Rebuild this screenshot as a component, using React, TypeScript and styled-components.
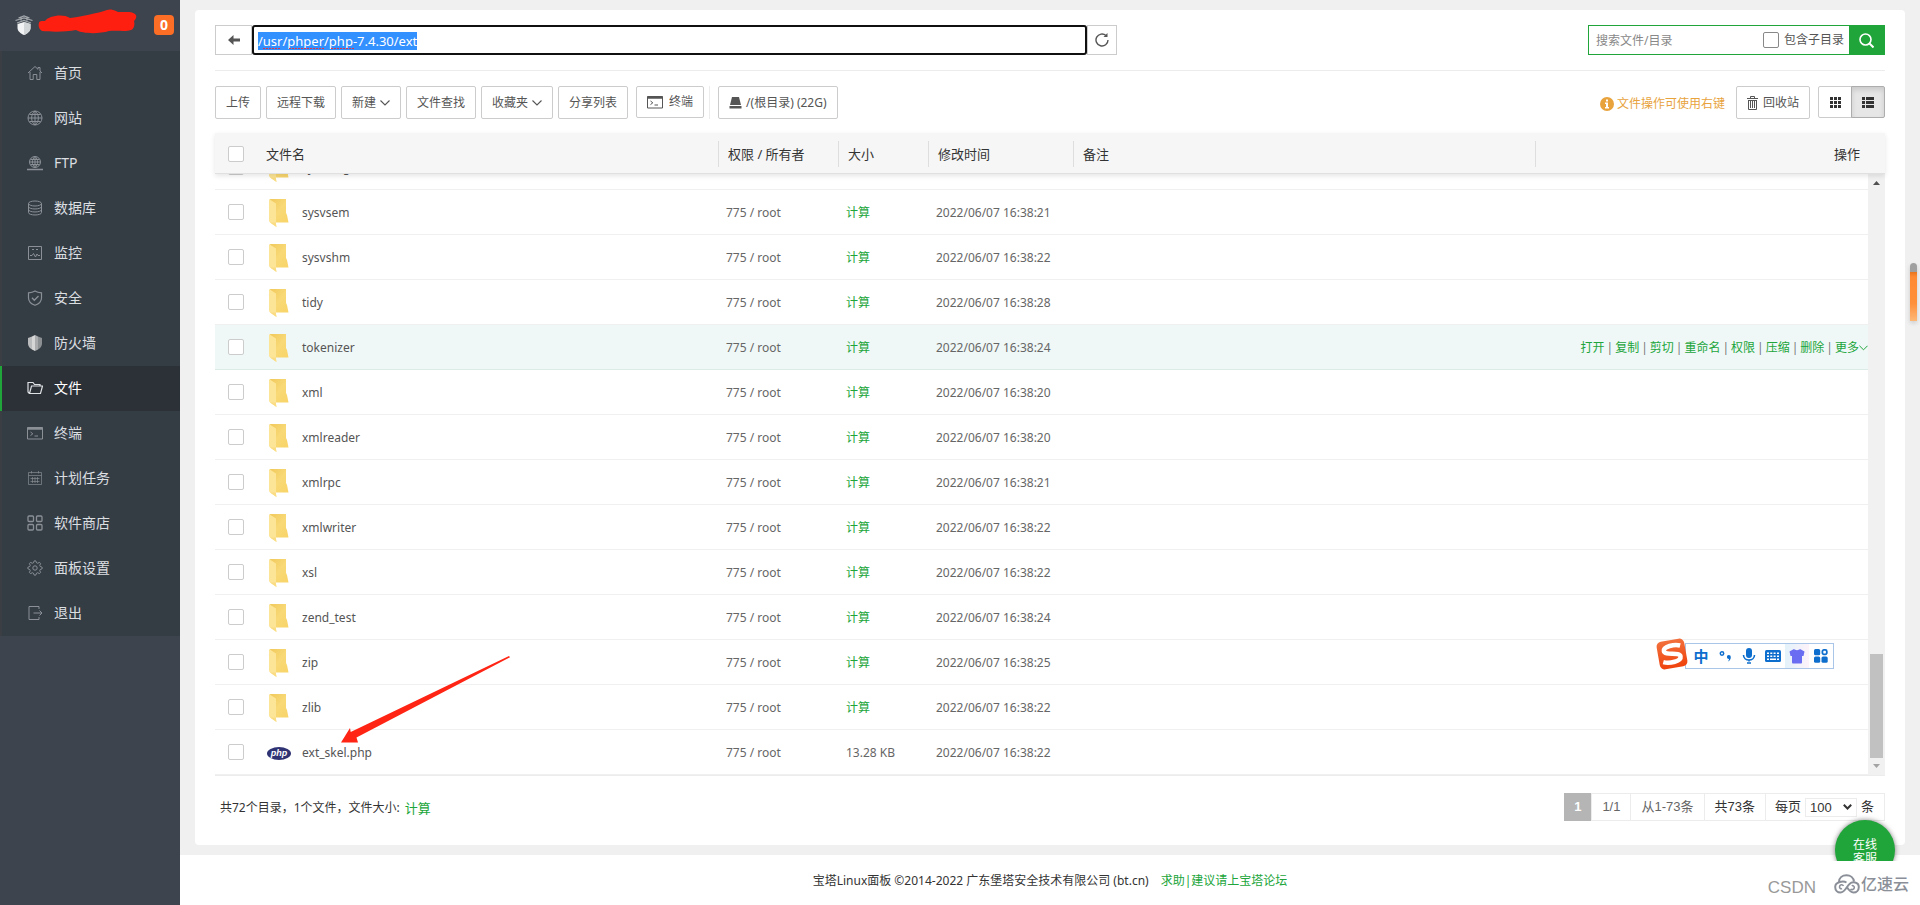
import React, { useEffect, useRef } from "react";
import styled, { createGlobalStyle, css } from "styled-components";

const GREEN = "#20a53a";

const GlobalStyle = createGlobalStyle`
  *, *::before, *::after { box-sizing: border-box; }
  body {
    margin: 0;
    background: #f0f0f0;
    color: #333;
    font: 12px/18px "Noto Sans", "Noto Sans CJK SC", sans-serif;
  }
  button, input, select { font: inherit; color: inherit; margin: 0; }
  button { cursor: pointer; }
  a { text-decoration: none; }
  svg { display: block; flex: none; }
`;

/* ---------- page frame ---------- */

const Page = styled.div`
  position: relative;
  display: flex;
  min-height: 100vh;
  overflow: hidden;
`;

const Main = styled.div`
  flex: 1;
  min-width: 0;
  display: flex;
  flex-direction: column;
`;

const Card = styled.main`
  flex: 1 1 auto;
  display: flex;
  flex-direction: column;
  margin: 10px 15px;
  padding: 15px 20px 24px;
  background: #fff;
  border-radius: 4px;
`;

const Footer = styled.footer`
  display: flex;
  align-items: center;
  justify-content: center;
  gap: 12px;
  height: 50px;
  padding-top: 2px;
  background: #fff;
`;

const GreenLink = styled.a<{ $large?: boolean }>`
  color: ${GREEN};
  font-size: ${(p) => (p.$large ? 13 : 12)}px;
`;

/* ---------- sidebar ---------- */

const Sidebar = styled.aside`
  flex: none;
  width: 180px;
  background: #3d444d;
`;

const Brand = styled.div`
  display: flex;
  align-items: center;
  height: 51px;
  padding: 0 6px 2px 15px;
`;

const Scribble = styled.svg`
  margin: 0 auto 6px 4px;
`;

const Badge = styled.span`
  width: 20px;
  height: 20px;
  border-radius: 4px;
  background: #fc6d26;
  color: #fff;
  font-size: 14px;
  font-weight: 700;
  line-height: 20px;
  text-align: center;
`;

const Menu = styled.nav`
  background: #353d44;
`;

const MenuItem = styled.a<{ $active?: boolean }>`
  display: flex;
  align-items: center;
  gap: 11px;
  height: 45px;
  padding: 0 0 2px 25px;
  border-left: 2px solid ${(p) => (p.$active ? GREEN : "#3b3f43")};
  background: ${(p) => (p.$active ? "#2c3138" : "transparent")};
  color: ${(p) => (p.$active ? "#fff" : "#dcdfe2")};
  font-size: 14px;

  svg { color: ${(p) => (p.$active ? "#dfe2e4" : "#8a9096")}; }
`;

/* ---------- path and search ---------- */

const PathRow = styled.div`
  display: flex;
  justify-content: space-between;
  padding-bottom: 15px;
  border-bottom: 1px solid #ececec;
`;

const PathGroup = styled.div`
  display: flex;
  width: 54%;
  height: 30px;
`;

const PathButton = styled.button<{ $width: number }>`
  flex: none;
  display: flex;
  align-items: center;
  justify-content: center;
  width: ${(p) => p.$width}px;
  padding: 0;
  border: 1px solid #ccc;
  background: #fff;
  color: #555;
`;

const PathField = styled.div`
  position: relative;
  flex: 1;
`;

const PathInput = styled.input`
  display: block;
  width: 100%;
  height: 30px;
  padding: 2px 4px 0;
  border: 2px solid #101010;
  border-radius: 3px;
  outline: none;
  background: #fff;
  font-size: 13px;
  caret-color: transparent;

  &::selection { background: #3390ff; color: #fff; }
`;

const SpellMarks = styled.svg`
  position: absolute;
  left: 6px;
  top: 21px;
  pointer-events: none;
`;

const Search = styled.form`
  flex: none;
  display: flex;
  align-items: center;
  width: 297px;
  height: 30px;
  border: 1px solid ${GREEN};
  color: #555;
`;

const SearchInput = styled.input`
  flex: 1;
  min-width: 0;
  padding: 2px 7px 0;
  border: 0;
  outline: none;
  background: transparent;

  &::placeholder { color: #888; opacity: 1; }
`;

const SearchButton = styled.button`
  display: flex;
  align-items: center;
  justify-content: center;
  width: 35px;
  height: 28px;
  padding: 0;
  border: 0;
  background: ${GREEN};
  color: #fff;
`;

const CheckLabel = styled.label`
  display: flex;
  align-items: center;
  gap: 5px;
  margin-right: 5px;
`;

const Checkbox = styled.input.attrs({ type: "checkbox" })<{ $dark?: boolean }>`
  appearance: none;
  display: block;
  width: 16px;
  height: 16px;
  border: 1px solid ${(p) => (p.$dark ? "#888" : "#ccc")};
  border-radius: 2px;
  background: #fff;
`;

/* ---------- toolbar ---------- */

const Toolbar = styled.div`
  display: flex;
  justify-content: space-between;
  margin: 15px 0 14px;
`;

const ToolGroup = styled.div`
  display: flex;
  align-items: flex-start;
  gap: 5px;
`;

const ToolButton = styled.button<{ $gap?: number; $short?: boolean }>`
  display: flex;
  align-items: center;
  gap: ${(p) => p.$gap ?? 4}px;
  height: ${(p) => (p.$short ? 32 : 33)}px;
  padding: 0 10px;
  border: 1px solid #ccc;
  border-radius: 2px;
  background: #fff;
  color: #555;
  white-space: nowrap;
`;

const TerminalSlot = styled.div`
  height: 33px;
  margin-left: 3px;
  padding-right: 5px;
  border-right: 1px solid #ececec;
`;

const DiskSlot = styled.div`
  margin-left: 3px;
`;

const Hint = styled.span`
  display: flex;
  align-items: center;
  align-self: center;
  gap: 3px;
  margin-right: 6px;
  padding-top: 2px;
  color: #e8a33d;
`;

const ViewSwitch = styled.div`
  display: flex;
  margin-left: 3px;
`;

const ViewButton = styled.button<{ $on?: boolean }>`
  display: flex;
  align-items: center;
  justify-content: center;
  width: 34px;
  height: 32px;
  padding: 0;
  border: 1px solid #ccc;
  border-radius: 2px 0 0 2px;
  background: #fff;
  color: #333;
  ${(p) =>
    p.$on &&
    css`
      margin-left: -1px;
      border-color: #adadad;
      border-radius: 0 2px 2px 0;
      background: #e6e6e6;
      box-shadow: inset 0 3px 5px rgba(0, 0, 0, 0.12);
    `}
`;

/* ---------- file list ---------- */

const HeadTable = styled.table`
  position: relative;
  z-index: 1;
  width: 100%;
  table-layout: fixed;
  border-collapse: separate;
  border-spacing: 0;
  background: #f6f6f6;
  border-bottom: 1px solid #e0e0e0;
  box-shadow: 0 2px 5px rgba(0, 0, 0, 0.1);
`;

const HeadCell = styled.th<{ $right?: boolean }>`
  height: 40px;
  padding: 2px 0 0;
  font-size: 13px;
  font-weight: 400;
  text-align: ${(p) => (p.$right ? "right" : "left")};
`;

const HeadLabel = styled.div<{ $line?: boolean; $end?: boolean }>`
  height: 26px;
  line-height: 26px;
  padding: 0 ${(p) => (p.$end ? 25 : 0)}px 0 ${(p) => (p.$line ? 9 : 0)}px;
  border-left: ${(p) => (p.$line ? "1px solid #dedede" : "0")};
`;

const ListArea = styled.div`
  flex: 1 1 0px;
  min-height: 300px;
  display: flex;
  overflow: hidden;
`;

const Rows = styled.div`
  flex: 1;
  min-width: 0;
  display: flex;
  flex-direction: column;
  justify-content: flex-end;
`;

const BodyTable = styled.table`
  width: 100%;
  table-layout: fixed;
  border-collapse: separate;
  border-spacing: 0;
  color: #666;
`;

const Row = styled.tr<{ $hover?: boolean }>`
  background: ${(p) => (p.$hover ? "#f0f8f7" : "#fff")};
`;

const Cell = styled.td<{ $hover?: boolean; $right?: boolean }>`
  height: 45px;
  padding: 2px 0 0 8px;
  border-bottom: 1px solid ${(p) => (p.$hover ? "#dcebe6" : "#f0f0f0")};
  text-align: ${(p) => (p.$right ? "right" : "left")};
  white-space: nowrap;
`;

const CheckCell = styled(Cell)`
  padding: 0 0 0 13px;
`;

const NameCell = styled(Cell)`
  padding-left: 1px;
`;

const CheckHead = styled(HeadCell)`
  padding-left: 13px;
`;

const NameWrap = styled.div`
  position: relative;
  display: flex;
  align-items: center;
  gap: 11px;
  color: #555;
`;

const Actions = styled.div`
  display: flex;
  align-items: center;
  justify-content: flex-end;
  color: #777;
`;

const Bar = styled.span`
  padding: 0 2px;
`;

const MoreLink = styled(GreenLink)`
  display: flex;
  align-items: center;
`;

const Annotation = styled.svg`
  position: absolute;
  left: 74px;
  bottom: 24px;
  pointer-events: none;
`;

const Scrollbar = styled.div`
  flex: none;
  display: flex;
  flex-direction: column;
  align-items: center;
  width: 17px;
  padding: 5px 0;
  background: #f1f1f1;
`;

const Track = styled.div`
  flex: 1;
  display: flex;
  flex-direction: column;
  justify-content: flex-end;
  padding-bottom: 4px;
`;

const Thumb = styled.div`
  width: 13px;
  height: 104px;
  background: #c1c1c1;
`;

/* ---------- summary and paging ---------- */

const BottomRow = styled.div`
  display: flex;
  justify-content: space-between;
  align-items: flex-end;
  padding-top: 17px;
  border-top: 1px solid #ececec;
`;

const Summary = styled.div`
  display: flex;
  align-items: center;
  gap: 5px;
  height: 28px;
  padding: 2px 0 0 5px;
`;

const Pager = styled.div`
  display: flex;
  height: 28px;
  border: 1px solid #ececec;
  border-left: 0;
  font: 13px/26px "Liberation Sans", "Noto Sans CJK SC", sans-serif;
`;

const PagerPart = styled.span<{ $current?: boolean; $soft?: boolean }>`
  display: flex;
  align-items: center;
  padding: 0 10px;
  color: ${(p) => (p.$soft ? "#666" : "#333")};
  & + & { border-left: 1px solid #ececec; }
  ${(p) =>
    p.$current &&
    css`
      margin: -1px 0;
      background: #b5b5b5;
      color: #fff;
      font-weight: 700;
    `}
`;

const PagerLabel = styled.label`
  display: flex;
  align-items: center;
  gap: 4px;
  padding: 0 10px 0 9px;
  border-left: 1px solid #ececec;
`;

const SelectBox = styled.span`
  position: relative;
  display: flex;
  align-items: center;
  color: #333;

  svg { position: absolute; right: 5px; pointer-events: none; }
`;

const SizeSelect = styled.select`
  appearance: none;
  width: 52px;
  height: 19px;
  padding: 0 4px;
  border: 1px solid #ececec;
  background: #fff;
  line-height: 17px;
`;

/* ---------- floating pieces ---------- */

const InputMethod = styled.div`
  position: absolute;
  right: 86px;
  bottom: 236px;
  display: flex;
  align-items: center;
  width: 149px;
  height: 26px;
  padding-left: 3px;
  border: 1px solid #a9c6e8;
  background: #fff;
  color: #0d6ecd;
`;

const InputMethodLogo = styled.span`
  position: absolute;
  left: -28px;
  top: -4px;
  width: 28px;
  height: 28px;
  border-radius: 5px;
  background: linear-gradient(#f2703c, #f0430d);
  transform: rotate(-10deg);
`;

const InputMethodKey = styled.span<{ $tint?: boolean }>`
  display: flex;
  align-items: center;
  justify-content: center;
  width: 24px;
  height: 24px;
  font-size: 15px;
  font-weight: 700;
  background: ${(p) => (p.$tint ? "linear-gradient(90deg, #e3f2fa, #fdf2fa)" : "none")};
`;

const EdgeTab = styled.div`
  position: absolute;
  right: 3px;
  top: 263px;
  width: 7px;
  height: 58px;
  border-radius: 4px 4px 0 0;
  background: linear-gradient(#a0a0a0 0 9px, #e8761f 9px, #ff8a33 14px, #ff8f3a 40px, #fdb877 58px);
  box-shadow: 0 2px 4px rgba(0, 0, 0, 0.15);
`;

const ServiceClip = styled.div`
  position: absolute;
  right: 17px;
  bottom: 44px;
  width: 76px;
  height: 49px;
  overflow: hidden;
`;

const ServiceButton = styled.button`
  display: block;
  width: 60px;
  height: 60px;
  margin: 8px;
  padding: 0 17px;
  border: 0;
  border-radius: 50%;
  background: ${GREEN};
  color: #fff;
  line-height: 14px;
  box-shadow: 0 0 5px rgba(0, 0, 0, 0.5);
`;

const ServiceText = styled.span`
  display: block;
  padding-top: 4px;
`;

const Watermarks = styled.div`
  position: absolute;
  right: 11px;
  bottom: 7px;
  display: flex;
  align-items: center;
  gap: 18px;
  color: #8b8f98;
`;

const CsdnMark = styled.span`
  padding-top: 5px;
  color: #999;
  font: 17px/20px "Liberation Sans", sans-serif;
`;

const CloudMark = styled.span`
  display: flex;
  align-items: center;
  gap: 1px;
  margin-bottom: 4px;
  font-size: 16px;
  font-weight: 500;
`;

/* ---------- icons ---------- */

const Line = ({ children, size = 16 }: { children: React.ReactNode; size?: number }) => (
  <svg width={size} height={size} viewBox="0 0 16 16" fill="none" stroke="currentColor" strokeWidth="1" aria-hidden="true">
    {children}
  </svg>
);

const HomeIcon = () => (
  <Line>
    <path d="M1 8 8 1.5l3 2.8V2.5h2v3.6L15 8M3 7v7.5h3.2v-5h3.6v5H13V7" />
  </Line>
);
const GlobeIcon = () => (
  <Line>
    <path d="M1 8a7 7 0 1 0 14 0A7 7 0 1 0 1 8M1 8h14M8 1v14M2.5 4.5h11M2.5 11.5h11M8 1C3.5 4 3.5 12 8 15M8 1c4.5 3 4.5 11 0 14" />
  </Line>
);
const FtpIcon = () => (
  <Line>
    <path d="M2.5 7a5.5 5.5 0 1 0 11 0a5.5 5.5 0 1 0-11 0M2.5 7h11M8 1.5v11M3.5 4.500h9M3.5 9.5h9M8 1.5c-3.500 3-3.500 8 0 11M8 1.5c3.500 3 3.500 8 0 11" />
    <path d="M0 14.500h16M5.500 14.500h5" strokeWidth="1.500" />
  </Line>
);
const DatabaseIcon = () => (
  <Line>
    <ellipse cx="8" cy="3.500" rx="6.500" ry="2.500" />
    <path d="M1.500 3.500v9c0 3.300 13 3.300 13 0v-9M1.500 6.500c0 3.300 13 3.300 13 0M1.500 9.500c0 3.300 13 3.300 13 0" />
  </Line>
);
const MonitorIcon = () => (
  <Line>
    <path d="M1.500 1.500h13v13h-13zM3 10.500h2l1.500-2 2 3.500L10 9l1 1.500h2" />
    <path d="M5 4.500h2M9 4.500h2" />
  </Line>
);
const ShieldCheckIcon = () => (
  <Line>
    <path d="M8 1c2 1.300 4 1.700 6.500 1.800V8c0 3.500-3 6-6.500 7.300C4.500 14 1.500 11.500 1.500 8V2.800C4 2.700 6 2.300 8 1z" strokeWidth="1.200" />
    <path d="m5 7.800 2.300 2.400L11.500 6" strokeWidth="1.300" />
  </Line>
);
const FirewallIcon = () => (
  <svg width="16" height="16" viewBox="0 0 16 16" aria-hidden="true">
    <path d="M8 0 5 1.500v13L8 16z" fill="#d6d6d6" />
    <path d="M5 1.500 1 3v6c0 2 2 4.500 4 5.500z" fill="#b9bbbc" />
    <path d="m8 0 3 1.500v13L8 16z" fill="#a9abad" />
    <path d="M11 1.500 15 3v6c0 2-2 4.500-4 5.500z" fill="#8d9093" />
  </svg>
);
const FolderOpenIcon = () => (
  <Line>
    <path d="M2.500 13.500 1 12V2.500h5l1.500 2H13V6M2.500 13.500h11L15.500 6H4.500z" strokeWidth="1.200" />
  </Line>
);
const TerminalIcon = () => (
  <Line>
    <path d="M.500 2.500h15v11.500H.500z" />
    <path d="M.500 3.500h15" strokeWidth="2.500" />
    <path d="m3.500 7 2.300 1.800-2.300 1.800M7.500 11h3.500" />
  </Line>
);
const CalendarIcon = () => (
  <Line>
    <path d="M1.500 2.500h13v12h-13zM1.500 5.500h13M4.500 1v2.500M11.500 1v2.500M3.500 8.500h9M3.500 11.500h9M5.500 7v6M8 7v6M10.500 7v6" opacity=".65" />
  </Line>
);
const AppsIcon = () => (
  <Line>
    {[1, 9.5].map((x) => [1, 9.5].map((y) => <rect key={`${x}-${y}`} x={x} y={y} width="5.500" height="5.500" rx="1" strokeWidth="1.300" />))}
  </Line>
);

const gearOutline = Array.from({ length: 32 }, (_, i) => {
  const angle = ((i - 0.5) * Math.PI) / 16;
  const radius = i % 4 < 2 ? 7.2 : 5.4;
  return `${(8 + radius * Math.sin(angle)).toFixed(2)},${(8 - radius * Math.cos(angle)).toFixed(2)}`;
}).join(" ");

const GearIcon = () => (
  <Line>
    <polygon points={gearOutline} />
    <circle cx="8" cy="8" r="2.200" />
  </Line>
);
const ExitIcon = () => (
  <Line>
    <path d="M12 4V1.500H2v13h10V12M6.500 8H15M12.500 5.500 15 8l-2.500 2.500" />
  </Line>
);

const Chevron = ({ width = 10 }: { width?: number }) => (
  <svg width={width} height="8" viewBox="0 0 10 8" fill="none" stroke="currentColor" strokeWidth="1.100" aria-hidden="true">
    <path d="m.500 1.500 4.500 4.500 4.500-4.500" />
  </svg>
);

const BrandShield = () => (
  <svg width="18" height="20" viewBox="0 0 18 20" aria-hidden="true">
    <path d="M2.500 9 9 7l6.500 2v4c0 3-3 5.500-6.500 7-3.500-1.500-6.500-4-6.500-7z" fill="#f2f3f4" />
    <path d="M9 7l6.500 2v4c0 3-3 5.500-6.500 7z" fill="#d3d6d9" />
    <path d="M2 8 9 5.500 16 8M.500 5.500 9 3l8.500 2.500M3.500 3 9 1l5.500 2M6 1.500v4M12 1.500v4" fill="none" stroke="#a3a8ad" strokeWidth="1.300" />
  </svg>
);

const FolderIcon = () => (
  <svg width="24" height="28" viewBox="0 0 24 28" aria-hidden="true">
    <defs>
      <linearGradient id="folderBack" x1="0" x2="1" y1="0" y2="1">
        <stop offset="0" stopColor="#f1c95c" />
        <stop offset=".5" stopColor="#f8d976" />
        <stop offset="1" stopColor="#f9d468" />
      </linearGradient>
    </defs>
    <path d="M3 0h16v14l1 2 1.500 7.500H8z" fill="url(#folderBack)" />
    <path d="M2 0 9 4.500v20L9.500 28 3 23.500 2 22z" fill="#fce596" />
    <path d="M3 23.500h5.500L9.500 28z" fill="#f9dc83" />
  </svg>
);

const PhpIcon = () => (
  <svg width="24" height="28" viewBox="0 0 24 28" aria-hidden="true">
    <ellipse cx="12" cy="14.500" rx="12" ry="6.500" fill="#2f3374" />
    <text x="12" y="17" fill="#fff" fontFamily="Liberation Sans, sans-serif" fontSize="9" fontWeight="700" fontStyle="italic" textAnchor="middle">
      php
    </text>
  </svg>
);

const DiskIcon = () => (
  <svg width="13" height="12" viewBox="0 0 13 12" fill="#555" aria-hidden="true">
    <path d="M3 0h7l2 8H1zM.500 9h12v2.500H.500z" />
  </svg>
);

const TrashIcon = () => (
  <svg width="11" height="14" viewBox="0 0 11 14" fill="none" stroke="#555" aria-hidden="true">
    <path d="M0 2.500h11M3.500 2.500v-2h4v2M1.500 4v9.500h8V4M3.500 5v7M5.500 5v7M7.500 5v7M1 4.500h9" />
  </svg>
);

/* ---------- data ---------- */

const menu: { label: string; icon: React.FC; active?: boolean }[] = [
  { label: "首页", icon: HomeIcon },
  { label: "网站", icon: GlobeIcon },
  { label: "FTP", icon: FtpIcon },
  { label: "数据库", icon: DatabaseIcon },
  { label: "监控", icon: MonitorIcon },
  { label: "安全", icon: ShieldCheckIcon },
  { label: "防火墙", icon: FirewallIcon },
  { label: "文件", icon: FolderOpenIcon, active: true },
  { label: "终端", icon: TerminalIcon },
  { label: "计划任务", icon: CalendarIcon },
  { label: "软件商店", icon: AppsIcon },
  { label: "面板设置", icon: GearIcon },
  { label: "退出", icon: ExitIcon },
];

const files: { name: string; time?: string; size?: string; hover?: boolean }[] = [
  { name: "sysvmsg" },
  { name: "sysvsem", time: "16:38:21" },
  { name: "sysvshm", time: "16:38:22" },
  { name: "tidy", time: "16:38:28" },
  { name: "tokenizer", time: "16:38:24", hover: true },
  { name: "xml", time: "16:38:20" },
  { name: "xmlreader", time: "16:38:20" },
  { name: "xmlrpc", time: "16:38:21" },
  { name: "xmlwriter", time: "16:38:22" },
  { name: "xsl", time: "16:38:22" },
  { name: "zend_test", time: "16:38:24" },
  { name: "zip", time: "16:38:25" },
  { name: "zlib", time: "16:38:22" },
  { name: "ext_skel.php", time: "16:38:22", size: "13.28 KB" },
];

const rowActions = ["打开", "复制", "剪切", "重命名", "权限", "压缩", "删除"];

const Columns = ({ last }: { last: number }) => (
  <colgroup>
    <col width="51" />
    <col width="452" />
    <col width="120" />
    <col width="90" />
    <col width="145" />
    <col />
    <col width={last} />
  </colgroup>
);

const FileRow = ({ file }: { file: (typeof files)[number] }) => {
  const h = file.hover;
  return (
    <Row $hover={h}>
      <CheckCell $hover={h}>
        <Checkbox aria-label={file.name} />
      </CheckCell>
      <NameCell $hover={h}>
        <NameWrap>
          {file.size ? <PhpIcon /> : <FolderIcon />}
          {file.name}
          {file.size && (
            <Annotation width="170" height="88" viewBox="0 0 170 88" fill="#ff2414" aria-hidden="true">
              <path d="M0 87.500 9 73l.7 4L168 1l1 1.200L15.500 82.500 17 87.500z" />
            </Annotation>
          )}
        </NameWrap>
      </NameCell>
      <Cell $hover={h}>{file.time && "775 / root"}</Cell>
      <Cell $hover={h}>{file.time && (file.size ?? <GreenLink href="#size">计算</GreenLink>)}</Cell>
      <Cell $hover={h}>{file.time && `2022/06/07 ${file.time}`}</Cell>
      <Cell $hover={h} />
      <Cell $hover={h} $right>
        {h && (
          <Actions>
            {rowActions.map((a) => (
              <React.Fragment key={a}>
                <GreenLink href="#action">{a}</GreenLink>
                <Bar>|</Bar>
              </React.Fragment>
            ))}
            <MoreLink href="#more">
              更多
              <Chevron width={9} />
            </MoreLink>
          </Actions>
        )}
      </Cell>
    </Row>
  );
};

export default function App() {
  const pathRef = useRef<HTMLInputElement>(null);

  useEffect(() => {
    pathRef.current?.focus();
    pathRef.current?.select();
  }, []);

  return (
    <Page>
      <GlobalStyle />
      <Sidebar>
        <Brand>
          <BrandShield />
          <Scribble width="100" height="26" viewBox="0 0 100 26" aria-hidden="true">
            <path
              d="M2 14c0-2 3-2 6-2 3-5 18-8 25-3 10-1 28-5 37-8 5-2 10 2 12 2 8 0 14-1 17 3 1 3-1 5-2 6 1 4 0 8-3 9-6 2-14 0-22 1-10 3-26 3-33-1-10 2-24 2-34 1-3-2-4-5-3-8z"
              fill="#ff1f10"
            />
          </Scribble>
          <Badge>0</Badge>
        </Brand>
        <Menu>
          {menu.map(({ label, icon: Icon, active }) => (
            <MenuItem key={label} href="#menu" $active={active}>
              <Icon />
              {label}
            </MenuItem>
          ))}
        </Menu>
      </Sidebar>

      <Main>
        <Card>
          <PathRow>
            <PathGroup>
              <PathButton $width={37} aria-label="返回上一级">
                <svg width="12" height="10" viewBox="0 0 12 10" fill="currentColor" aria-hidden="true">
                  <path d="M5.500 0v3.500H12v3H5.500V10L0 5z" />
                </svg>
              </PathButton>
              <PathField>
                <PathInput ref={pathRef} defaultValue="/usr/phper/php-7.4.30/ext" aria-label="路径" spellCheck={false} />
                <SpellMarks width="100" height="4" viewBox="0 0 100 4" fill="none" stroke="#e0364c" strokeDasharray="2 1" aria-hidden="true">
                  <path d="M5 2.500h18M31 2.500h35M73 2.500h24" />
                </SpellMarks>
              </PathField>
              <PathButton $width={30} aria-label="刷新">
                <svg width="14" height="14" viewBox="0 0 14 14" fill="none" stroke="currentColor" strokeWidth="1.400" aria-hidden="true">
                  <path d="M13 7a6 6 0 1 1-2-4.500" />
                  <path d="M12.500 0v4H8.500z" fill="currentColor" stroke="none" />
                </svg>
              </PathButton>
            </PathGroup>
            <Search>
              <SearchInput placeholder="搜索文件/目录" aria-label="搜索文件/目录" />
              <CheckLabel>
                <Checkbox $dark />
                包含子目录
              </CheckLabel>
              <SearchButton type="button" aria-label="搜索">
                <svg width="15" height="15" viewBox="0 0 15 15" fill="none" stroke="currentColor" strokeWidth="1.600" aria-hidden="true">
                  <circle cx="6.500" cy="6.500" r="5.500" />
                  <path d="m10.500 10.500 4 4" strokeWidth="2" />
                </svg>
              </SearchButton>
            </Search>
          </PathRow>

          <Toolbar>
            <ToolGroup>
              <ToolButton>上传</ToolButton>
              <ToolButton>远程下载</ToolButton>
              <ToolButton>
                新建
                <Chevron />
              </ToolButton>
              <ToolButton>文件查找</ToolButton>
              <ToolButton>
                收藏夹
                <Chevron />
              </ToolButton>
              <ToolButton>分享列表</ToolButton>
              <TerminalSlot>
                <ToolButton $gap={6} $short>
                  <TerminalIcon />
                  终端
                </ToolButton>
              </TerminalSlot>
              <DiskSlot>
                <ToolButton>
                  <DiskIcon />
                  /(根目录) (22G)
                </ToolButton>
              </DiskSlot>
            </ToolGroup>
            <ToolGroup>
              <Hint>
                <svg width="14" height="14" viewBox="0 0 14 14" aria-hidden="true">
                  <circle cx="7" cy="7" r="7" fill="#e8a33d" />
                  <path d="M6 2.500h2v2H6zM5 5.500h3v4.500h1v1.500H5V10h1V7H5z" fill="#fff" />
                </svg>
                文件操作可使用右键
              </Hint>
              <ToolButton $gap={5}>
                <TrashIcon />
                回收站
              </ToolButton>
              <ViewSwitch>
                <ViewButton aria-label="图标视图">
                  <svg width="11" height="11" viewBox="0 0 11 11" fill="currentColor" aria-hidden="true">
                    <path d="M0 0h3v3H0zM4 0h3v3H4zM8 0h3v3H8zM0 4h3v3H0zM4 4h3v3H4zM8 4h3v3H8zM0 8h3v3H0zM4 8h3v3H4zM8 8h3v3H8z" />
                  </svg>
                </ViewButton>
                <ViewButton $on aria-label="列表视图">
                  <svg width="12" height="11" viewBox="0 0 12 11" fill="currentColor" aria-hidden="true">
                    <path d="M0 0h3v3H0zM4 0h8v3H4zM0 4h3v3H0zM4 4h8v3H4zM0 8h3v3H0zM4 8h8v3H4z" />
                  </svg>
                </ViewButton>
              </ViewSwitch>
            </ToolGroup>
          </Toolbar>

          <HeadTable>
            <Columns last={350} />
            <thead>
              <tr>
                <CheckHead>
                  <Checkbox aria-label="全选" />
                </CheckHead>
                <HeadCell>
                  <HeadLabel>文件名</HeadLabel>
                </HeadCell>
                {["权限 / 所有者", "大小", "修改时间", "备注"].map((t) => (
                  <HeadCell key={t}>
                    <HeadLabel $line>{t}</HeadLabel>
                  </HeadCell>
                ))}
                <HeadCell $right>
                  <HeadLabel $line $end>
                    操作
                  </HeadLabel>
                </HeadCell>
              </tr>
            </thead>
          </HeadTable>

          <ListArea>
            <Rows>
              <BodyTable aria-label="文件列表">
                <Columns last={333} />
                <tbody>
                  {files.map((f) => (
                    <FileRow key={f.name} file={f} />
                  ))}
                </tbody>
              </BodyTable>
            </Rows>
            <Scrollbar aria-hidden="true">
              <svg width="7" height="8" viewBox="0 0 7 8" fill="#505050">
                <path d="m0 6 3.500-4L7 6z" />
              </svg>
              <Track>
                <Thumb />
              </Track>
              <svg width="7" height="8" viewBox="0 0 7 8" fill="#a3a3a3">
                <path d="m0 2 3.500 4L7 2z" />
              </svg>
            </Scrollbar>
          </ListArea>

          <BottomRow>
            <Summary>
              共72个目录，1个文件，文件大小:
              <GreenLink $large href="#total">
                计算
              </GreenLink>
            </Summary>
            <Pager>
              <PagerPart $current>1</PagerPart>
              <PagerPart $soft>1/1</PagerPart>
              <PagerPart $soft>从1-73条</PagerPart>
              <PagerPart>共73条</PagerPart>
              <PagerLabel>
                每页
                <SelectBox>
                  <SizeSelect defaultValue="100">
                    <option>100</option>
                  </SizeSelect>
                  <svg width="9" height="6" viewBox="0 0 9 6" fill="none" stroke="currentColor" strokeWidth="2" aria-hidden="true">
                    <path d="m.800.800 3.700 3.700L8.200.800" />
                  </svg>
                </SelectBox>
                条
              </PagerLabel>
            </Pager>
          </BottomRow>
        </Card>
        <Footer>
          <span>宝塔Linux面板 ©2014-2022 广东堡塔安全技术有限公司 (bt.cn)</span>
          <GreenLink href="#forum">求助|建议请上宝塔论坛</GreenLink>
        </Footer>
      </Main>

      <InputMethod>
        <InputMethodLogo>
          <svg width="28" height="28" viewBox="0 0 28 28" fill="none" stroke="#fff" strokeWidth="4.500" aria-hidden="true">
            <path d="M23.500 7C18 4.500 6.500 5 6.500 9.800c0 5 15.500 3 15.500 8 0 5-12 5.500-18 2.700" />
          </svg>
        </InputMethodLogo>
        <InputMethodKey>中</InputMethodKey>
        <InputMethodKey>
          <svg width="14" height="14" viewBox="0 0 14 14" fill="none" stroke="currentColor" strokeWidth="1.500" aria-hidden="true">
            <circle cx="4" cy="4.500" r="1.700" />
            <path d="M10.800 6a2 2 0 0 1 2 2c0 2.400-1.300 4-3 4.500.700-.800 1.200-1.500 1.200-2.500A2 2 0 0 1 10.800 6z" fill="currentColor" stroke="none" />
          </svg>
        </InputMethodKey>
        <InputMethodKey>
          <svg width="14" height="16" viewBox="0 0 14 16" fill="none" stroke="currentColor" strokeWidth="1.600" aria-hidden="true">
            <rect x="4" y="0" width="6" height="10" rx="3" fill="currentColor" stroke="none" />
            <path d="M1.500 7c0 3 2.500 5 5.500 5s5.500-2 5.500-5M7 12v1.500M5 15h4" />
          </svg>
        </InputMethodKey>
        <InputMethodKey>
          <svg width="16" height="12" viewBox="0 0 16 12" aria-hidden="true">
            <rect width="16" height="12" rx="1.500" fill="currentColor" />
            <path d="M2 2.500h2v1.500H2zM5.300 2.500h2v1.500h-2zM8.600 2.500h2v1.500h-2zM12 2.500h2v1.500h-2zM2 5.500h2V7H2zM5.300 5.500h2V7h-2zM8.600 5.500h2V7h-2zM12 5.500h2V7h-2zM2 8.500h2v1.500H2zM5 8.500h6v1.500H5zM12 8.500h2v1.500h-2z" fill="#fff" />
          </svg>
        </InputMethodKey>
        <InputMethodKey $tint>
          <svg width="16" height="16" viewBox="0 0 16 16" aria-hidden="true">
            <path d="M5 1c1 1.500 5 1.500 6 0l4.500 2.500-1 4.500H13v6.500c0 .500-.500 1-1 1H4c-.500 0-1-.500-1-1V8H1.500L.500 3.500z" fill="#6a6cf2" />
          </svg>
        </InputMethodKey>
        <InputMethodKey>
          <svg width="14" height="14" viewBox="0 0 14 14" fill="currentColor" aria-hidden="true">
            <rect width="6.200" height="6.200" rx="1.500" />
            <rect y="7.500" width="6.200" height="6.200" rx="1.500" />
            <rect x="7.500" y="7.500" width="6.200" height="6.200" rx="1.500" />
            <rect x="8.400" y=".900" width="4.400" height="4.400" rx="1.500" fill="none" stroke="currentColor" strokeWidth="1.800" />
          </svg>
        </InputMethodKey>
      </InputMethod>

      <EdgeTab />
      <ServiceClip>
        <ServiceButton>
          <ServiceText>在线客服</ServiceText>
        </ServiceButton>
      </ServiceClip>

      <Watermarks>
        <CsdnMark>CSDN</CsdnMark>
        <CloudMark>
          <svg width="26" height="20" viewBox="0 0 26 20" fill="none" stroke="currentColor" strokeWidth="2" aria-hidden="true">
            <path d="M5 8C5 3.500 8.500 1.200 12.500 1.200S19.500 4 20 7.500" />
            <path d="M12.500 8.500C9.500 6.800 1.200 7.500 1.200 13c0 3.200 2.300 5.500 5.300 5.500 4.500 0 6-6 9-8.500 2.500-2.500 9.300-2.500 9.300 3 0 3.200-2.300 5.500-5.300 5.500-3.500 0-5-3-7-6" />
            <path d="M9.500 12c-1-2-4-1.500-4 1 0 1.500 1.500 2.200 2.500 1.500M16.500 15c1 1.200 3.800.600 3.800-1.500 0-1.500-1.500-2.300-2.500-1.500" strokeWidth="1.600" />
          </svg>
          亿速云
        </CloudMark>
      </Watermarks>
    </Page>
  );
}
